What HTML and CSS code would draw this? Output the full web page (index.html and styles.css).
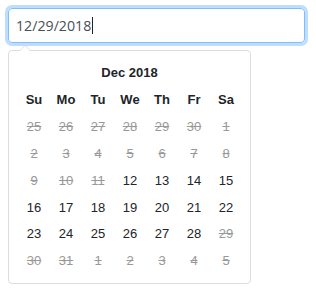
FILE: index.html
```html
<!DOCTYPE html>
<html lang="en">
<head>
    <meta charset="UTF-8">
    <title>Datepicker</title>
    <link rel="stylesheet" href="styles.css">
</head>
<body>
    <div class="field">
        <div class="input">12/29/2018<span class="caret"></span></div>
    </div>

    <div class="datepicker">
        <div class="switch">Dec 2018</div>
        <div class="grid">
            <span class="dow">Su</span>
            <span class="dow">Mo</span>
            <span class="dow">Tu</span>
            <span class="dow">We</span>
            <span class="dow">Th</span>
            <span class="dow">Fr</span>
            <span class="dow">Sa</span>

            <span class="off">25</span>
            <span class="off">26</span>
            <span class="off">27</span>
            <span class="off">28</span>
            <span class="off">29</span>
            <span class="off">30</span>
            <span class="off">1</span>

            <span class="off">2</span>
            <span class="off">3</span>
            <span class="off">4</span>
            <span class="off">5</span>
            <span class="off">6</span>
            <span class="off">7</span>
            <span class="off">8</span>

            <span class="off">9</span>
            <span class="off">10</span>
            <span class="off">11</span>
            <span>12</span>
            <span>13</span>
            <span>14</span>
            <span>15</span>

            <span>16</span>
            <span>17</span>
            <span>18</span>
            <span>19</span>
            <span>20</span>
            <span>21</span>
            <span>22</span>

            <span>23</span>
            <span>24</span>
            <span>25</span>
            <span>26</span>
            <span>27</span>
            <span>28</span>
            <span class="off">29</span>

            <span class="off">30</span>
            <span class="off">31</span>
            <span class="off">1</span>
            <span class="off">2</span>
            <span class="off">3</span>
            <span class="off">4</span>
            <span class="off">5</span>
        </div>
    </div>
</body>
</html>
```

FILE: styles.css
```css
* {
    margin: 0;
    padding: 0;
    box-sizing: border-box;
}
body {
    background: #fff;
    padding: 8px;
    font-family: "Liberation Sans", Arial, sans-serif;
}
.field {
    width: 297px;
}
.input {
    height: 35px;
    border: 1px solid #80bdff;
    border-radius: 4px;
    box-shadow: 0 0 0 3px rgba(0, 123, 255, .25);
    padding: 0 7px;
    display: flex;
    align-items: center;
    font-family: "Open Sans", sans-serif;
    font-size: 14.2px;
    color: #495057;
}
.caret {
    display: inline-block;
    width: 1px;
    height: 17px;
    background: #222;
    margin-left: 1px;
}

/* calendar popup */
.datepicker {
    position: relative;
    width: 243px;
    margin-top: 7px;
    border: 1px solid #ddd;
    border-radius: 4px;
    padding: 8px 9px 9px;
    font-size: 13px;
    color: #212529;
}
.datepicker::before {
    content: "";
    position: absolute;
    top: -6px;
    left: 10px;
    border-left: 6px solid transparent;
    border-right: 6px solid transparent;
    border-bottom: 6px solid #ddd;
}
.datepicker::after {
    content: "";
    position: absolute;
    top: -5px;
    left: 11px;
    border-left: 5px solid transparent;
    border-right: 5px solid transparent;
    border-bottom: 5px solid #fff;
}
.switch {
    height: 27px;
    line-height: 27px;
    text-align: center;
    font-weight: bold;
}
.grid {
    display: grid;
    grid-template-columns: repeat(7, 32px);
    grid-auto-rows: 26.9px;
}
.grid span {
    display: flex;
    align-items: center;
    justify-content: center;
}
.grid .dow {
    font-weight: bold;
}
.grid .off {
    color: #999;
    text-decoration: line-through;
}
```
